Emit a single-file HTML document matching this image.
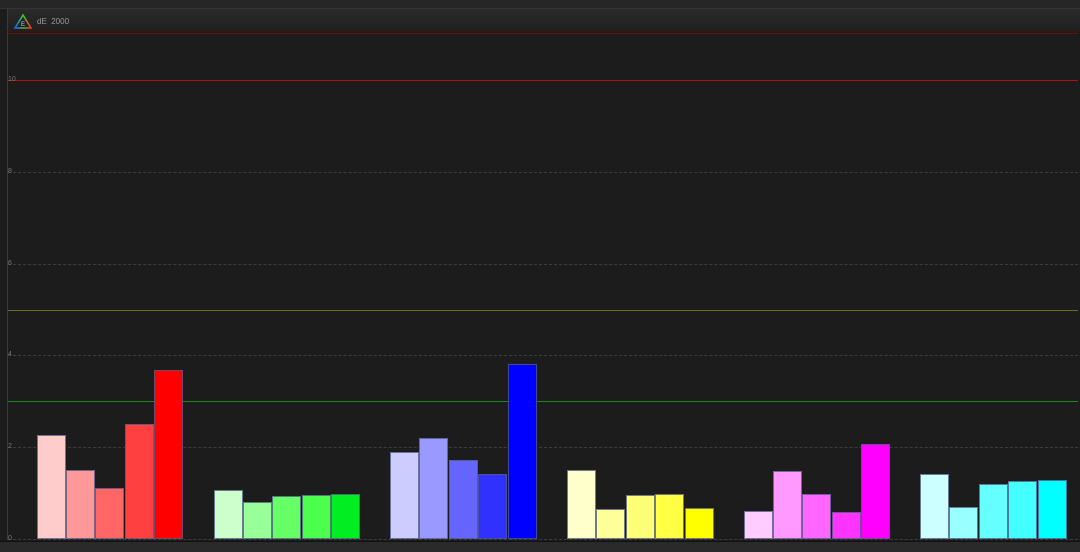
<!DOCTYPE html>
<html><head><meta charset="utf-8"><style>
*{margin:0;padding:0;box-sizing:border-box}
body{width:1080px;height:552px;background:#1c1c1c;position:relative;overflow:hidden;font-family:"Liberation Sans",sans-serif}
.a{position:absolute}
.h{position:absolute;left:8px;right:2px;height:0}
.dot{border-top:1px dashed #3c3c3c}
.lbl{position:absolute;left:8px;font-size:7px;color:#777}
.b{position:absolute;width:29px;bottom:13px;border:1px solid rgba(80,90,130,.8)}
</style></head><body>
<div class="a" style="left:0;top:0;width:1080px;height:9px;background:#262626;border-bottom:1px solid #333"></div>
<div class="a" style="left:7px;top:9px;width:1073px;height:23px;background:linear-gradient(#2a2a2a,#202020);border-bottom:1px solid #3a1414;border-left:1px solid #3a3a3a"></div>
<svg class="a" style="left:13px;top:13px" width="20" height="17" viewBox="0 0 20 17"><defs><linearGradient id="g" x1="0" x2="1"><stop offset="0" stop-color="#2060ff"/><stop offset=".5" stop-color="#30d030"/><stop offset="1" stop-color="#ff3030"/></linearGradient></defs><path d="M10 2 L18 15 L2 15 Z" fill="none" stroke="url(#g)" stroke-width="1.6"/><text x="8" y="13" font-size="6" fill="#ccc" font-family="Liberation Sans">E</text></svg>
<div class="a" style="left:37px;top:17px;font-size:8px;color:#999">dE&nbsp; 2000</div>
<div class="a" style="left:7px;top:32px;width:1px;height:508px;background:#3a3a3a"></div>
<div class="h" style="top:33px;border-top:1px solid #6a1010"></div>
<div class="h" style="top:80px;border-top:1px solid #b01010"></div><div class="lbl" style="top:76px">10</div>
<div class="h dot" style="top:172px"></div><div class="lbl" style="top:168px">8</div>
<div class="h dot" style="top:264px"></div><div class="lbl" style="top:260px">6</div>
<div class="h" style="top:310px;border-top:1px solid #6a6a20"></div>
<div class="h dot" style="top:355px"></div><div class="lbl" style="top:351px">4</div>
<div class="h" style="top:401px;border-top:1px solid #1a8a1a"></div>
<div class="h dot" style="top:447px"></div><div class="lbl" style="top:443px">2</div>
<div class="h dot" style="top:539px"></div><div class="lbl" style="top:535px">0</div>
<div class="a" style="left:0;top:541px;width:1080px;height:11px;background:#2a2a2a;border-top:1px solid #111"></div>

<div class="b" style="left:37px;top:435px;background:#ffcccc"></div>
<div class="b" style="left:66px;top:470px;background:#ff9999"></div>
<div class="b" style="left:95px;top:488px;background:#ff6666"></div>
<div class="b" style="left:125px;top:424px;background:#ff4040"></div>
<div class="b" style="left:154px;top:370px;background:#ff0000"></div>

<div class="b" style="left:214px;top:490px;background:#ccffcc"></div>
<div class="b" style="left:243px;top:502px;background:#99ff99"></div>
<div class="b" style="left:272px;top:496px;background:#66ff66"></div>
<div class="b" style="left:302px;top:495px;background:#4dff4d"></div>
<div class="b" style="left:331px;top:494px;background:#00ee22"></div>

<div class="b" style="left:390px;top:452px;background:#ccccff"></div>
<div class="b" style="left:419px;top:438px;background:#9999ff"></div>
<div class="b" style="left:449px;top:460px;background:#6666ff"></div>
<div class="b" style="left:478px;top:474px;background:#3030ff"></div>
<div class="b" style="left:508px;top:364px;background:#0000ff"></div>

<div class="b" style="left:567px;top:470px;background:#ffffcc"></div>
<div class="b" style="left:596px;top:509px;background:#ffff99"></div>
<div class="b" style="left:626px;top:495px;background:#ffff77"></div>
<div class="b" style="left:655px;top:494px;background:#ffff44"></div>
<div class="b" style="left:685px;top:508px;background:#ffff00"></div>

<div class="b" style="left:744px;top:511px;background:#ffccff"></div>
<div class="b" style="left:773px;top:471px;background:#ff99ff"></div>
<div class="b" style="left:802px;top:494px;background:#ff66ff"></div>
<div class="b" style="left:832px;top:512px;background:#ff33ff"></div>
<div class="b" style="left:861px;top:444px;background:#ff00ff"></div>

<div class="b" style="left:920px;top:474px;background:#ccffff"></div>
<div class="b" style="left:949px;top:507px;background:#99ffff"></div>
<div class="b" style="left:979px;top:484px;background:#66ffff"></div>
<div class="b" style="left:1008px;top:481px;background:#44ffff"></div>
<div class="b" style="left:1038px;top:480px;background:#00ffff"></div>
</body></html>
